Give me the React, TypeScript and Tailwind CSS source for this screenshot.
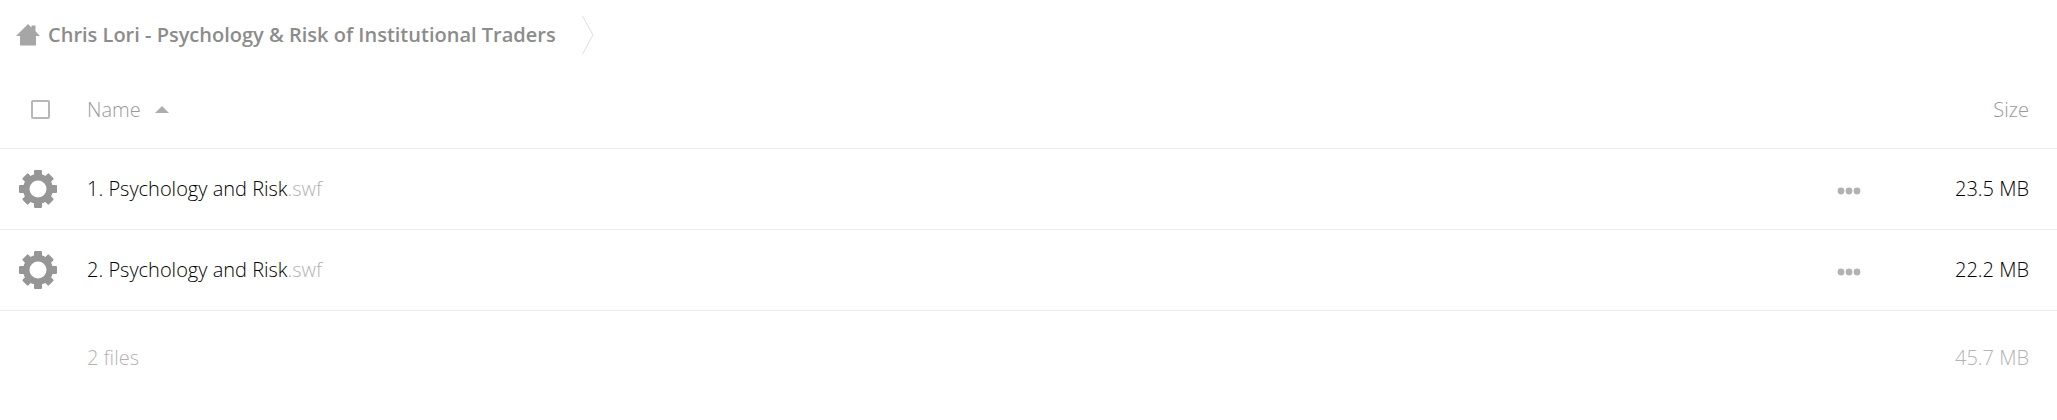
const files = [
  { id: 1, name: "1. Psychology and Risk", ext: ".swf", size: "23.5 MB" },
  { id: 2, name: "2. Psychology and Risk", ext: ".swf", size: "22.2 MB" },
];

const HomeIcon = () => (
  <svg className="h-[22px] w-6" viewBox="0 0 24 22" fill="currentColor">
    <path d="M12 0l3.5 3.4V1.5h4v5.8L24 12h-4v9.6H4V12H0z" />
  </svg>
);

const GearIcon = () => (
  <svg className="h-[38px] w-[38px]" viewBox="0 0 38 38" fill="currentColor">
    {/* 8 teeth around the ring */}
    {[0, 45, 90, 135].map((angle) => (
      <rect
        key={angle}
        x={15}
        y={angle % 90 === 0 ? 0 : 0.4}
        width={8}
        height={angle % 90 === 0 ? 38 : 37.2}
        rx={1}
        transform={`rotate(${angle} 19 19)`}
      />
    ))}
    <circle cx="19" cy="19" r="15" />
    <circle cx="19" cy="19" r="8.5" fill="white" />
  </svg>
);

const Breadcrumb = () => (
  <nav aria-label="Breadcrumb" className="flex h-[70px] items-center pl-4">
    <a href="#" aria-label="Home" className="text-[#a6a6a6]">
      <HomeIcon />
    </a>
    <a href="#" className="ml-2 font-semibold text-[#8c8c8c]">
      Chris Lori - Psychology &amp; Risk of Institutional Traders
    </a>
    <svg
      className="ml-[26px] h-[38px] w-3"
      viewBox="0 0 12 38"
      fill="none"
      stroke="#dedede"
    >
      <path d="M0.5 0L11 19L0.5 38" />
    </svg>
  </nav>
);

const FileTable = () => (
  <table className="w-full table-fixed border-collapse text-left font-light">
    <colgroup>
      <col className="w-[87px]" />
      <col />
      <col className="w-[52px]" />
      <col className="w-[182px]" />
    </colgroup>
    <thead>
      <tr className="h-[78px] border-b border-[#ebebeb] text-[#999999]">
        <th className="pt-0.5 pl-[31px] font-light">
          <input
            type="checkbox"
            aria-label="Select all"
            className="block h-[19px] w-[19px] appearance-none rounded-xs border-2 border-[#b8b8b8] checked:bg-[#b8b8b8]"
          />
        </th>
        <th className="pt-0.5 font-light">
          <button type="button" className="flex items-center gap-[14px]">
            Name
            <svg className="h-[7px] w-[14px]" viewBox="0 0 14 7" fill="#adadad">
              <path d="M7 0l7 7H0z" />
            </svg>
          </button>
        </th>
        <th />
        <th className="pt-0.5 pr-7 text-right font-light">Size</th>
      </tr>
    </thead>
    <tbody>
      {files.map((file) => (
        <tr
          key={file.id}
          className="h-[81px] border-b border-[#ebebeb] text-black"
        >
          <td className="pl-[19px] text-[#969696]">
            <GearIcon />
          </td>
          <td>
            <a href="#">
              {file.name}
              <span className="text-[#b3b3b3]">{file.ext}</span>
            </a>
          </td>
          <td>
            <button
              type="button"
              aria-label="More actions"
              className="mt-1 ml-3.5 block text-[#b2b2b2]"
            >
              <svg className="h-2 w-6" viewBox="0 0 24 8" fill="currentColor">
                <circle cx="4" cy="4" r="3.4" />
                <circle cx="12" cy="4" r="3.4" />
                <circle cx="20" cy="4" r="3.4" />
              </svg>
            </button>
          </td>
          <td className="pr-7 text-right">{file.size}</td>
        </tr>
      ))}
    </tbody>
    <tfoot>
      <tr className="h-24 text-[#b3b3b3]">
        <td />
        <td>2 files</td>
        <td />
        <td className="pr-7 text-right">45.7 MB</td>
      </tr>
    </tfoot>
  </table>
);

const App = () => {
  return (
    <main className="min-h-screen bg-white font-['Open_Sans',sans-serif] text-xl">
      <Breadcrumb />
      <FileTable />
    </main>
  );
};

export default App;
